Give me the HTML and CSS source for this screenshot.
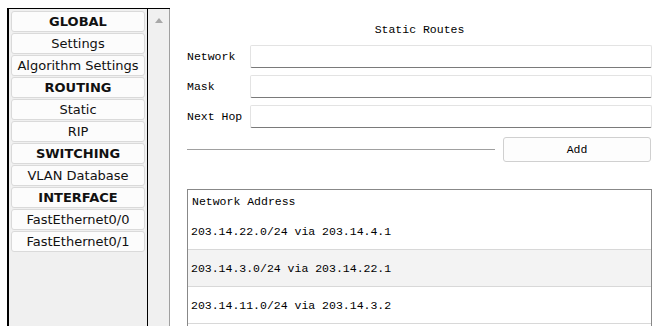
FILE: index.html
```html
<!DOCTYPE html>
<html lang="en">
<head>
  <meta charset="UTF-8" />
  <title>Router - Static Routes</title>
  <link rel="stylesheet" href="styles.css">
</head>
<body>
  <div class="sidebar">
    <div class="menu">
      <button class="item head">GLOBAL</button>
      <button class="item">Settings</button>
      <button class="item">Algorithm Settings</button>
      <button class="item head">ROUTING</button>
      <button class="item">Static</button>
      <button class="item">RIP</button>
      <button class="item head">SWITCHING</button>
      <button class="item">VLAN Database</button>
      <button class="item head">INTERFACE</button>
      <button class="item">FastEthernet0/0</button>
      <button class="item">FastEthernet0/1</button>
    </div>
    <div class="scrollbar">
      <span class="arrow"></span>
    </div>
  </div>

  <div class="main">
    <div class="title">Static Routes</div>
    <div class="form">
      <label>Network</label>
      <input type="text">
      <label>Mask</label>
      <input type="text">
      <label>Next Hop</label>
      <input type="text">
    </div>
    <div class="actions">
      <div class="rule"></div>
      <button class="add">Add</button>
    </div>
    <div class="routes">
      <div class="routes-head">Network Address</div>
      <div class="route">203.14.22.0/24 via 203.14.4.1</div>
      <div class="route alt">203.14.3.0/24 via 203.14.22.1</div>
      <div class="route">203.14.11.0/24 via 203.14.3.2</div>
      <div class="route"></div>
    </div>
  </div>
</body>
</html>
```

FILE: styles.css
```css
* {
  margin: 0;
  padding: 0;
  box-sizing: border-box;
}

body {
  width: 667px;
  height: 326px;
  overflow: hidden;
  background: #fff;
  display: flex;
  font-family: 'Liberation Mono', 'DejaVu Sans Mono', monospace;
  font-size: 11.5px;
  color: #000;
}

/* left menu */
.sidebar {
  display: flex;
  margin: 8px 0 0 7px;
  height: 340px;
  border-top: 1px solid #000;
}

.menu {
  width: 141px;
  background: #f0f0f0;
  border-left: 2px solid #000;
  border-right: 1px solid #000;
  padding: 2px 2px 0 2px;
  display: flex;
  flex-direction: column;
  gap: 1px;
}

.item {
  height: 21px;
  background: #fcfcfc;
  border: 1px solid #dadada;
  border-radius: 3px;
  font-family: 'DejaVu Sans', Tahoma, sans-serif;
  font-size: 13px;
  color: #111;
  text-align: center;
  line-height: 18px;
  white-space: nowrap;
}

.item.head {
  font-weight: bold;
}

.scrollbar {
  width: 22px;
  background: #f0f0f0;
  border-right: 1px solid #a0a0a0;
  display: flex;
  justify-content: center;
  padding-top: 9px;
}

.arrow {
  width: 0;
  height: 0;
  border-left: 4px solid transparent;
  border-right: 4px solid transparent;
  border-bottom: 5px solid #a8a8a8;
}

/* right side */
.main {
  flex: 1;
  padding: 22px 15px 0 17px;
}

.title {
  text-align: center;
  line-height: 16px;
  margin-bottom: 7px;
}

.form {
  display: grid;
  grid-template-columns: 63px 1fr;
  row-gap: 7px;
  align-items: center;
}

.form input {
  height: 23px;
  border: 1px solid #e3e3e3;
  border-bottom: 1px solid #7a7a7a;
  border-radius: 2px;
  background: #fff;
  outline: none;
}

.actions {
  display: flex;
  align-items: center;
  margin-top: 9px;
  gap: 8px;
}

.rule {
  flex: 1;
  height: 1px;
  background: #a0a0a0;
}

.add {
  width: 148px;
  height: 25px;
  background: #fdfdfd;
  border: 1px solid #d0d0d0;
  border-radius: 3px;
  font-family: 'Liberation Mono', 'DejaVu Sans Mono', monospace;
  font-size: 11.5px;
  color: #000;
  margin-right: 1px;
}

.routes {
  margin-top: 27px;
  width: 465px;
  border: 1px solid #888;
  border-bottom: none;
}

.routes-head {
  height: 23px;
  line-height: 23px;
  padding-left: 4px;
}

.route {
  height: 37px;
  line-height: 38px;
  padding-left: 3px;
  border-bottom: 1px solid #d8d8d8;
}

.route.alt {
  background: #f3f3f3;
}
```
